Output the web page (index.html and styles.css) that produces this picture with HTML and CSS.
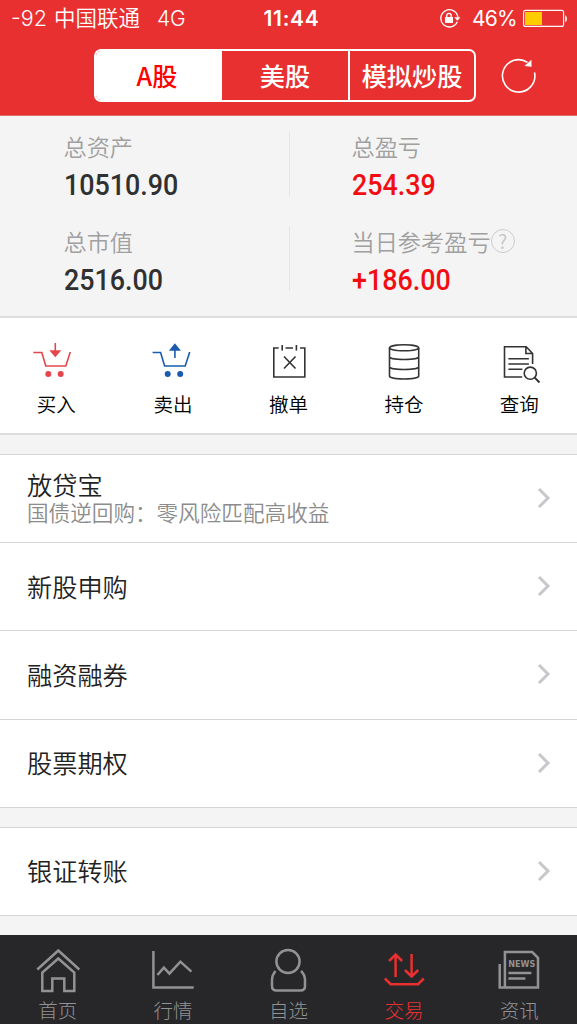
FILE: index.html
```html
<!DOCTYPE html>
<html lang="zh-CN">
<head>
<meta charset="utf-8">
<title>交易</title>
<link rel="stylesheet" href="styles.css">
</head>
<body>
<div class="app">
  <header class="header">
    <div class="status">
      <div class="carrier"><span>-92</span><span>中国联通</span><span class="net">4G</span></div>
      <div class="clock">11:44</div>
      <div class="power">
        <svg class="lock" viewBox="440 8 22 21" fill="none" stroke="#fff" stroke-width="1.3">
          <path d="M458.3 21.8A8.6 8.6 0 1 1 458.9 17"/>
          <path d="M455.3 17.2h6.2l-3.1 3.6z" fill="#fff" stroke="none"/>
          <rect x="446" y="17" width="8" height="6" fill="#fff" stroke="none"/>
          <path d="M447.8 17.5v-2a2.2 2.2 0 0 1 4.4 0v2"/>
        </svg>
        <span class="percent">46%</span>
        <svg class="battery" viewBox="522 9 46 19" fill="none">
          <rect x="523.6" y="10.4" width="40" height="16" rx="2" stroke="#fff" stroke-width="1.1"/>
          <rect x="525" y="12" width="17" height="13" fill="#fc0"/>
          <path d="M565.2 15.2c2.3 1 2.3 6 0 7z" fill="#fff"/>
        </svg>
      </div>
    </div>
    <div class="nav">
      <div class="segments">
        <div class="segment active">A股</div>
        <div class="segment">美股</div>
        <div class="segment last">模拟炒股</div>
      </div>
      <svg class="refresh" viewBox="500 56 38 38" fill="none" stroke="#fff" stroke-width="1.6">
        <path d="M534.5 72.5A16.2 16.2 0 1 1 527.5 62.3"/>
        <path d="M531.4 59.8l.2 7-7.2-.8z" fill="#fff" stroke="none"/>
      </svg>
    </div>
  </header>

  <section class="summary">
    <div class="stat"><div class="label">总资产</div><div class="value">10510.90</div></div>
    <div class="stat right"><div class="label">总盈亏</div><div class="value up">254.39</div></div>
    <div class="stat"><div class="label">总市值</div><div class="value">2516.00</div></div>
    <div class="stat right"><div class="label">当日参考盈亏<span class="help">?</span></div><div class="value up">+186.00</div></div>
  </section>

  <nav class="actions">
    <div class="action first">
      <svg viewBox="27.7 340 60 44" fill="none" stroke="#e4474b" stroke-width="1.6">
        <path d="M33 352.5h8.5l4 13.5h20l4.5-14"/>
        <path d="M55 343v8"/><path d="M49 350.3h12l-6 7z" fill="#e4474b" stroke="none"/>
        <circle cx="48" cy="374" r="3" fill="#e4474b" stroke="none"/><circle cx="60.4" cy="374" r="3" fill="#e4474b" stroke="none"/>
      </svg><span>买入</span>
    </div>
    <div class="action">
      <svg viewBox="143.1 340 60 44" fill="none" stroke="#1a5bae" stroke-width="1.6">
        <path d="M152.7 352.5h8l4 13.5h20.6l4.5-14"/>
        <path d="M175 349v9"/><path d="M169 350.7h12l-6-7.5z" fill="#1a5bae" stroke="none"/>
        <circle cx="167.8" cy="374" r="3" fill="#1a5bae" stroke="none"/><circle cx="180.3" cy="374" r="3" fill="#1a5bae" stroke="none"/>
      </svg><span>卖出</span>
    </div>
    <div class="action">
      <svg viewBox="258 340 60 44" fill="none" stroke="#333" stroke-width="1.6">
        <path d="M278.7 348h-4.9v29h31v-29h-4.8M285.5 348h7.5M282.2 345v5.5M296.4 345v5.5M284 356.5l11.5 12M295.5 356.5l-11.5 12"/>
      </svg><span>撤单</span>
    </div>
    <div class="action">
      <svg viewBox="373.9 340 60 44" fill="none" stroke="#333" stroke-width="1.6">
        <ellipse cx="404" cy="347.8" rx="14.6" ry="3"/>
        <path d="M389.4 348v28c0 4 29.2 4 29.2 0v-28M389.4 356.8c0 3.6 29.2 3.6 29.2 0M389.4 366.8c0 3.6 29.2 3.6 29.2 0"/>
      </svg><span>持仓</span>
    </div>
    <div class="action">
      <svg viewBox="489.6 340 60 44" fill="none" stroke="#333" stroke-width="1.6">
        <path d="M522.8 377h-17.7v-30.2h21.7l6.4 6.7v10.5M526.5 347v6.5h6.5M509 358.7h20.5M509 364h20.5M509 369.2h14"/>
        <circle cx="530.9" cy="373.2" r="6.1"/><path d="M535.3 377.6l4.8 4.9" stroke-width="2"/>
      </svg><span>查询</span>
    </div>
  </nav>

  <main class="content">
    <div class="list">
      <div class="row"><div><div class="title">放贷宝</div><div class="subtitle">国债逆回购：零风险匹配高收益</div></div><svg class="chevron" viewBox="0 0 14 22"><path d="M2 2l9 9-9 9"/></svg></div>
      <div class="row"><div class="title">新股申购</div><svg class="chevron" viewBox="0 0 14 22"><path d="M2 2l9 9-9 9"/></svg></div>
      <div class="row"><div class="title">融资融券</div><svg class="chevron" viewBox="0 0 14 22"><path d="M2 2l9 9-9 9"/></svg></div>
      <div class="row"><div class="title">股票期权</div><svg class="chevron" viewBox="0 0 14 22"><path d="M2 2l9 9-9 9"/></svg></div>
    </div>
    <div class="list">
      <div class="row"><div class="title">银证转账</div><svg class="chevron" viewBox="0 0 14 22"><path d="M2 2l9 9-9 9"/></svg></div>
    </div>
  </main>

  <footer class="tabs">
    <div class="tab">
      <svg viewBox="27.7 946 60 48"><path d="M37 969.5l21-19 21 19M42 991v-18.5l16-14 16 14v18.5h-10v-12.5h-12v12.5z"/></svg><span>首页</span>
    </div>
    <div class="tab">
      <svg viewBox="143.1 946 60 48"><path d="M153.5 951v36.5h40.3M157.5 975l6.5-7.3 5.5 6 11-12 11 10"/></svg><span>行情</span>
    </div>
    <div class="tab">
      <svg viewBox="258.5 946 60 48"><circle cx="288.5" cy="961.5" r="11.6"/><path d="M276 971c-2.3 2.6-3.5 5.5-3.5 9v6c0 3 1.5 4.5 4.5 4.5h24c3 0 4.5-1.5 4.5-4.5v-6c0-3.5-1.7-6.700-4-9"/></svg><span>自选</span>
    </div>
    <div class="tab active">
      <svg viewBox="373.9 946 60 48"><path d="M395.5 977v-22M389 961l6.5-6.5 6.5 6.5M411.5 954v21.5M404.8 970l6.7 6.5 6.7-6.5M384.8 978.5l5.7 5.700h27.5l5.700-5.700"/></svg><span>交易</span>
    </div>
    <div class="tab">
      <svg viewBox="489.3 946 60 48"><path d="M505.2 987.5v-35.5h27.3l5.8 5.8v29.7h-38.3v-23.5M508.7 973h23M508.7 978.5h17"/><text x="508.5" y="967" textLength="27" lengthAdjust="spacingAndGlyphs">NEWS</text></svg><span>资讯</span>
    </div>
  </footer>
</div>
</body>
</html>
```
FILE: styles.css
```css
* { box-sizing: border-box; }
body { margin: 0; font-family: "Noto Sans CJK SC", sans-serif; font-weight: 300; color: #222; }
.app { width: 577px; height: 1024px; display: flex; flex-direction: column; background: #f4f4f4; overflow: hidden; }
svg { display: block; flex: none; }

.header { height: 116px; background: #e83030; color: #fff; border-bottom: 1px solid #e46a6a; }
.status { height: 37px; padding: 0 9px 0 11px; display: grid; grid-template-columns: 1fr auto 1fr; align-items: center; font: 400 21px/37px Inter, "Noto Sans CJK SC", sans-serif; }
.carrier { display: flex; gap: 7px; font-size: 21.5px; font-weight: 350; }
.net { margin-left: 10px; font-size: 21px; }
.clock { font-weight: 600; letter-spacing: .7px; padding-left: 4px; }
.power { display: flex; justify-content: flex-end; align-items: center; }
.lock { width: 22px; height: 21px; }
.percent { margin: 0 5px 0 11px; letter-spacing: -.7px; }
.battery { width: 46px; height: 19px; }
.nav { display: flex; align-items: center; padding: 12px 0 0 94px; }
.segments { width: 382px; height: 53px; display: grid; grid-template-columns: 126px 126px 126px; border: 2px solid #fff; border-radius: 7px; overflow: hidden; background: #e83030; }
.segment { text-align: center; font-size: 25.2px; font-weight: 500; line-height: 48px; white-space: nowrap; }
.segment.active { padding-right: 4px; background: #fff; color: #f00; }
.segment.last { border-left: 2px solid #fff; }
.refresh { width: 38px; height: 38px; margin: -2px 0 0 24px; }

.summary { height: 202px; padding: 16px 0 0; display: grid; grid-template-columns: 290px 1fr; grid-template-rows: 64px 64px; row-gap: 31px; border-bottom: 2px solid #ddd; }
.stat { padding-left: 63.5px; border-right: 1px solid #e5e5e5; }
.stat.right { padding-left: 61.5px; border-right: 0; }
.label { display: flex; align-items: center; height: 28px; font-size: 23.2px; line-height: 28px; padding-bottom: 1px; font-weight: 350; color: #a0a0a0; }
.help { width: 24px; height: 24px; border: 1px solid #ccc; border-radius: 50%; text-align: center; font-size: 19px; line-height: 21px; color: #c4c4c4; }
.value { width: max-content; margin-top: 5px; font: 500 29.5px/40px Roboto, sans-serif; color: #303030; transform: scaleX(.91); transform-origin: left; }
.value.up { color: #f10d12; }

.actions { height: 117px; padding-top: 22px; display: grid; grid-template-columns: repeat(5, 1fr); background: #fff; border-bottom: 2px solid #ddd; }
.action { display: flex; flex-direction: column; align-items: center; font-size: 19.5px; line-height: 40px; font-weight: 350; color: #000; }
.action svg { width: 60px; height: 44px; }
.action.first span { margin-right: 3px; }

.content { flex: 1; padding-top: 19px; display: flex; flex-direction: column; gap: 19px; }
.list { background: #fff; border-top: 1px solid #d5d5d5; }
.row { height: 88.2px; padding: 0 26px 1px 27px; display: flex; justify-content: space-between; align-items: center; border-bottom: 1px solid #d5d5d5; }
.title { font-size: 25.2px; line-height: 28px; margin-top: -1px; font-weight: 350; }
.subtitle { font-size: 21.6px; line-height: 27px; font-weight: 350; color: #8c8c8c; }
.chevron { width: 14px; height: 22px; fill: none; stroke: #c8c8cc; stroke-width: 3; }

.tabs { height: 89px; padding-top: 11px; display: grid; grid-template-columns: repeat(5, 1fr); background: #27272a; }
.tab { display: flex; flex-direction: column; align-items: center; color: #929292; font-size: 19.5px; line-height: 31px; }
.tab svg { width: 60px; height: 48px; fill: none; stroke: currentColor; stroke-width: 2.5; }
.tab text { font: 700 8px "DejaVu Sans", sans-serif; fill: currentColor; stroke: none; }
.tab.active { color: #e83030; }
```
